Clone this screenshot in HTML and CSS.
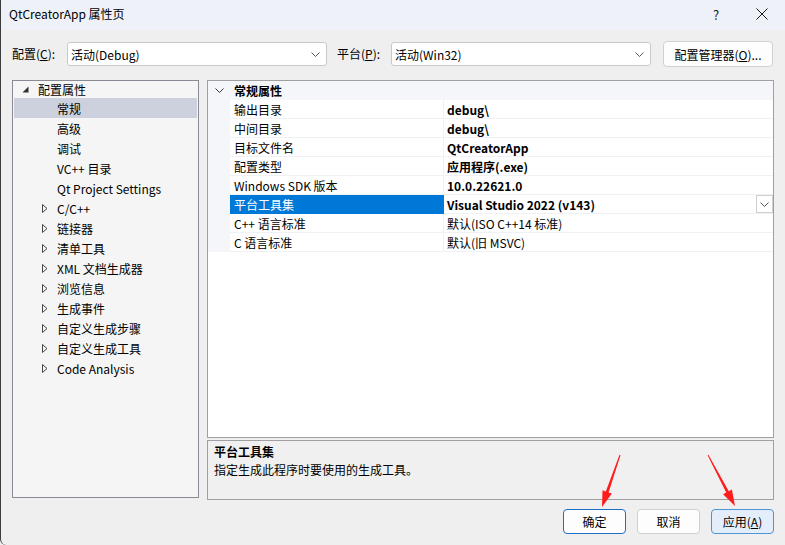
FILE: index.html
```html
<!DOCTYPE html>
<html lang="zh-CN">
<head>
<meta charset="utf-8">
<title>QtCreatorApp 属性页</title>
<link rel="stylesheet" href="styles.css">
</head>
<body>
<div class="window">
  <div class="titlebar">
    <span class="title">QtCreatorApp 属性页</span>
    <span class="tb-btn help">?</span>
    <span class="tb-btn close">
      <svg width="12" height="12" viewBox="0 0 12 12"><path d="M0.5 0.5 L11.5 11.5 M11.5 0.5 L0.5 11.5" stroke="#1a1a1a" stroke-width="1" fill="none"/></svg>
    </span>
  </div>

  <div class="configbar">
    <span class="label">配置(<u>C</u>):</span>
    <div class="combo">
      <span>活动(Debug)</span>
      <svg class="chev" width="9" height="5" viewBox="0 0 9 5"><path d="M0.5 0.5 L4.5 4.5 L8.5 0.5" stroke="#555" fill="none"/></svg>
    </div>
    <span class="label label2">平台(<u>P</u>):</span>
    <div class="combo">
      <span>活动(Win32)</span>
      <svg class="chev" width="9" height="5" viewBox="0 0 9 5"><path d="M0.5 0.5 L4.5 4.5 L8.5 0.5" stroke="#555" fill="none"/></svg>
    </div>
    <div class="btn mgr">配置管理器(<u>O</u>)...</div>
  </div>

  <div class="main">
    <div class="tree">
      <div class="trow top">
        <svg class="tri-open" width="7" height="7" viewBox="0 0 7 7"><path d="M6.5 0.5 L6.5 6.5 L0.5 6.5 Z" fill="#333"/></svg>
        <span>配置属性</span>
      </div>
      <div class="trow leaf sel"><span>常规</span></div>
      <div class="trow leaf"><span>高级</span></div>
      <div class="trow leaf"><span>调试</span></div>
      <div class="trow leaf"><span>VC++ 目录</span></div>
      <div class="trow leaf"><span>Qt Project Settings</span></div>
      <div class="trow branch"><svg class="tri" width="6" height="9" viewBox="0 0 6 9"><path d="M0.5 0.5 L5 4.5 L0.5 8.5 Z" fill="none" stroke="#444"/></svg><span>C/C++</span></div>
      <div class="trow branch"><svg class="tri" width="6" height="9" viewBox="0 0 6 9"><path d="M0.5 0.5 L5 4.5 L0.5 8.5 Z" fill="none" stroke="#444"/></svg><span>链接器</span></div>
      <div class="trow branch"><svg class="tri" width="6" height="9" viewBox="0 0 6 9"><path d="M0.5 0.5 L5 4.5 L0.5 8.5 Z" fill="none" stroke="#444"/></svg><span>清单工具</span></div>
      <div class="trow branch"><svg class="tri" width="6" height="9" viewBox="0 0 6 9"><path d="M0.5 0.5 L5 4.5 L0.5 8.5 Z" fill="none" stroke="#444"/></svg><span>XML 文档生成器</span></div>
      <div class="trow branch"><svg class="tri" width="6" height="9" viewBox="0 0 6 9"><path d="M0.5 0.5 L5 4.5 L0.5 8.5 Z" fill="none" stroke="#444"/></svg><span>浏览信息</span></div>
      <div class="trow branch"><svg class="tri" width="6" height="9" viewBox="0 0 6 9"><path d="M0.5 0.5 L5 4.5 L0.5 8.5 Z" fill="none" stroke="#444"/></svg><span>生成事件</span></div>
      <div class="trow branch"><svg class="tri" width="6" height="9" viewBox="0 0 6 9"><path d="M0.5 0.5 L5 4.5 L0.5 8.5 Z" fill="none" stroke="#444"/></svg><span>自定义生成步骤</span></div>
      <div class="trow branch"><svg class="tri" width="6" height="9" viewBox="0 0 6 9"><path d="M0.5 0.5 L5 4.5 L0.5 8.5 Z" fill="none" stroke="#444"/></svg><span>自定义生成工具</span></div>
      <div class="trow branch"><svg class="tri" width="6" height="9" viewBox="0 0 6 9"><path d="M0.5 0.5 L5 4.5 L0.5 8.5 Z" fill="none" stroke="#444"/></svg><span>Code Analysis</span></div>
    </div>

    <div class="right">
      <div class="grid">
        <div class="grow head">
          <div class="strip"><svg width="9" height="5" viewBox="0 0 9 5"><path d="M0.5 0.5 L4.5 4.5 L8.5 0.5" stroke="#333" fill="none"/></svg></div>
          <div class="headtext">常规属性</div>
        </div>
        <div class="grow"><div class="strip"></div><div class="name">输出目录</div><div class="val b">debug\</div></div>
        <div class="grow"><div class="strip"></div><div class="name">中间目录</div><div class="val b">debug\</div></div>
        <div class="grow"><div class="strip"></div><div class="name">目标文件名</div><div class="val b">QtCreatorApp</div></div>
        <div class="grow"><div class="strip"></div><div class="name">配置类型</div><div class="val b">应用程序(.exe)</div></div>
        <div class="grow"><div class="strip"></div><div class="name">Windows SDK 版本</div><div class="val b">10.0.22621.0</div></div>
        <div class="grow selrow"><div class="strip"></div><div class="name">平台工具集</div>
          <div class="val b"><span>Visual Studio 2022 (v143)</span>
            <span class="dd"><svg width="9" height="5" viewBox="0 0 9 5"><path d="M0.5 0.5 L4.5 4.5 L8.5 0.5" stroke="#555" fill="none"/></svg></span>
          </div>
        </div>
        <div class="grow"><div class="strip"></div><div class="name">C++ 语言标准</div><div class="val">默认(ISO C++14 标准)</div></div>
        <div class="grow"><div class="strip"></div><div class="name">C 语言标准</div><div class="val">默认(旧 MSVC)</div></div>
      </div>
      <div class="desc">
        <div class="desc-title">平台工具集</div>
        <div class="desc-text">指定生成此程序时要使用的生成工具。</div>
      </div>
    </div>
  </div>

  <div class="actions">
    <div class="btn ok">确定</div>
    <div class="btn">取消</div>
    <div class="btn apply">应用(<u>A</u>)</div>
  </div>

  <svg class="arrows" width="785" height="545" viewBox="0 0 785 545">
    <polygon points="619.5,454.8 605.8,491.4 602.5,490.3 602,507 611.9,493.5 608.6,492.4 620.5,455.2" fill="#ff1c1c"/>
    <polygon points="707.6,455.2 726.2,492.6 723.1,494.2 735,506 731.9,489.6 728.8,491.2 708.4,454.8" fill="#ff1c1c"/>
  </svg>
</div>
</body>
</html>
```

FILE: styles.css
```css
* { box-sizing: border-box; }

body {
  margin: 0;
  width: 785px;
  height: 545px;
  overflow: hidden;
  background: #efefef;
  font-family: "Noto Sans CJK SC", "Noto Sans", sans-serif;
  font-size: 12px;
  color: #000;
}

.window {
  position: relative;
  width: 785px;
  height: 545px;
  background: #efefef;
  border-left: 1px solid #3c3c3c;
  border-bottom-left-radius: 6px;
}

u { text-decoration: underline; text-underline-offset: 1px; }

/* title bar */
.titlebar {
  height: 30px;
  background: #eef2f8;
  display: flex;
  align-items: center;
  padding-left: 8px;
}
.title { flex: 1; font-size: 12px; line-height: 16px; margin-top: -2px; }
.tb-btn {
  width: 46px;
  height: 30px;
  display: flex;
  align-items: center;
  justify-content: center;
  margin-top: -2px;
}
.help { font-size: 13px; color: #1a1a1a; }

/* config bar */
.configbar {
  display: flex;
  align-items: center;
  height: 26px;
  margin-top: 11px;
  padding-left: 11px;
}
.label { width: 55px; line-height: 16px; }
.label2 { width: 54px; margin-left: 10px; }
.combo {
  width: 260px;
  height: 24px;
  background: #fff;
  border: 1px solid #c9c9c9;
  border-radius: 3px;
  display: flex;
  align-items: center;
  justify-content: space-between;
  padding: 0 6px 0 3px;
}
.btn {
  height: 25px;
  display: flex;
  align-items: center;
  justify-content: center;
  border: 1px solid #d0d0d0;
  border-radius: 4px;
  background: #fdfdfd;
}
.mgr { width: 110px; height: 26px; margin-left: 12px; }

/* main area */
.main {
  display: flex;
  gap: 8px;
  margin-top: 13px;
  padding-left: 11px;
  height: 420px;
}
.tree {
  width: 187px;
  height: 418px;
  border: 1px solid #8a8a94;
  background: #f5f5f5;
}
.trow {
  height: 20px;
  display: flex;
  align-items: center;
  margin: 0 1px;
  white-space: nowrap;
}
.trow.top { height: 17px; padding-left: 8px; }
.tri-open { margin-right: 9px; }
.trow.leaf { padding-left: 43px; }
.trow.branch { padding-left: 28px; }
.tri { margin-right: 9px; }
.trow.sel { background: #cdd1dd; }

.right {
  width: 567px;
  display: flex;
  flex-direction: column;
  gap: 2px;
}
.grid {
  height: 358px;
  border: 1px solid #a0a0a0;
  background: #fff;
}
.grow {
  height: 19px;
  display: grid;
  grid-template-columns: 22px 214px 1fr;
}
.strip {
  background: #f4f6fa;
  display: flex;
  align-items: center;
  justify-content: center;
}
.head { background: #f4f6fa; grid-template-columns: 22px 1fr; }
.headtext { font-weight: bold; padding-left: 4px; display: flex; align-items: center; }
.name, .val {
  display: flex;
  align-items: center;
  border-bottom: 1px solid #eff1f4;
  white-space: nowrap;
}
.name { padding-left: 4px; border-right: 1px solid #eff1f4; }
.val { padding-left: 3px; justify-content: space-between; }
.val.b { font-weight: bold; }
.selrow .name { background: #0078d7; color: #fff; border-color: #0078d7; }
.dd {
  width: 17px;
  height: 18px;
  border: 1px solid #cfcfcf;
  background: #fff;
  display: flex;
  align-items: center;
  justify-content: center;
  font-weight: normal;
}

.desc {
  height: 60px;
  border: 1px solid #a0a0a0;
  background: #f0f0f0;
  padding: 2px 6px;
  line-height: 18px;
}
.desc-title { font-weight: bold; }

/* bottom buttons */
.actions {
  display: flex;
  justify-content: flex-end;
  gap: 11px;
  margin-top: 9px;
  padding-right: 11px;
}
.actions .btn { width: 63px; }
.btn.ok { border-color: #1b6fc6; }
.btn.apply { background: #e3eefa; border-color: #4e95d6; }

/* annotation arrows */
.arrows {
  position: absolute;
  left: -1px;
  top: 0;
  pointer-events: none;
}
```
